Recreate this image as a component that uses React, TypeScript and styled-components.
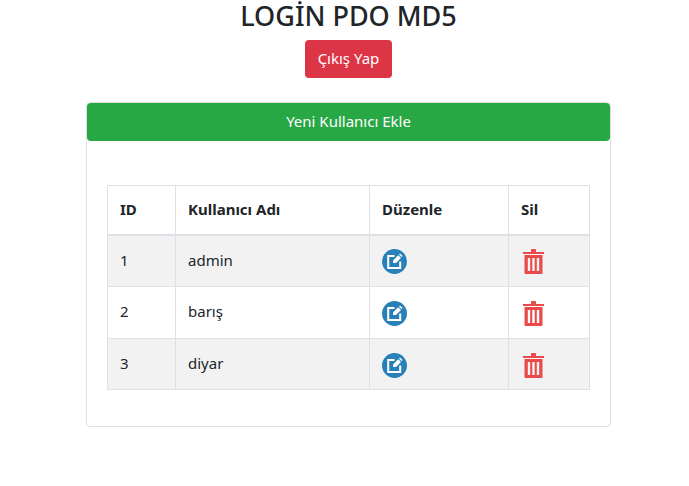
import React from "react";
import styled, { createGlobalStyle } from "styled-components";

const GlobalStyle = createGlobalStyle`
  * { box-sizing: border-box; }
  html, body { margin: 0; padding: 0; background: #fff; }
  body {
    font-family: "Noto Sans", "Open Sans", "Liberation Sans", sans-serif;
    font-size: 15px;
    line-height: 1.5;
    color: #212529;
  }
`;

const Page = styled.div`
  width: 689px;
  height: 486px;
  padding-left: 8px;
  overflow: hidden;
  display: flex;
  flex-direction: column;
  align-items: center;
`;
const Title = styled.h2`
  margin: 0;
  height: 40px;
  font-size: 27px;
  line-height: 32px;
  font-weight: 500;
  color: #212529;
`;
const LogoutButton = styled.a`
  display: block;
  height: 38px;
  width: 87px;
  background: #dc3545;
  color: #fff;
  border-radius: 4px;
  font-size: 15px;
  line-height: 37px;
  text-align: center;
`;
const Card = styled.div`
  width: 525px;
  height: 325px;
  margin-top: 24px;
  border: 1px solid #dfdfdf;
  border-radius: 4px;
`;
const AddButton = styled.a`
  display: block;
  height: 38px;
  background: #28a745;
  color: #fff;
  border-radius: 4px;
  font-size: 15px;
  line-height: 37px;
  text-align: center;
`;
const CardBody = styled.div`
  padding: 44px 20px 0;
`;
const Table = styled.table`
  width: 482px;
  table-layout: fixed;
  border-collapse: collapse;
`;
const HeadCell = styled.th<{ $width: number }>`
  width: ${({ $width }) => $width}px;
  height: 49px;
  padding: 0 12px 1px;
  border: 1px solid #dee2e6;
  border-bottom-width: 2px;
  text-align: left;
  font-weight: 700;
  font-size: 15px;
`;
const Row = styled.tr<{ $striped: boolean }>`
  background: ${({ $striped }) => ($striped ? "#f2f2f2" : "#fff")};
  &:last-child td {
    height: 51px;
  }
`;
const Cell = styled.td`
  height: 52px;
  padding: 0 12px 2px;
  border: 1px solid #dee2e6;
  font-size: 15px;
  vertical-align: middle;
`;
const IconCell = styled(Cell)`
  padding: 2px 12px 0;
`;
const IconSvg = styled.svg`
  display: block;
`;

const EditIcon = () => (
  <IconSvg width="25" height="25" viewBox="0 0 25 25">
    <circle cx="12.5" cy="12.5" r="12.5" fill="#2980b9" />
    <path d="M12.5 7H6.2V19H18.2V12.5" fill="none" stroke="#fff" strokeWidth="2" />
    <path d="M10.2 15l-.2-4.4L16.8 3.8l4.4 4.4L14.4 15z" fill="#2980b9" />
    <path d="M11 14l.2-2.8 5-5 2.8 2.8-5 5z" fill="#fff" />
    <path d="M17 5.4l1-1 2.6 2.6-1 1z" fill="#fff" />
  </IconSvg>
);

const TrashIcon = () => (
  <IconSvg width="24" height="25" viewBox="0 0 24 25">
    <path d="M10 3V.8A.8.8 0 0 1 10.8 0h3.4a.8.8 0 0 1 .8.8V3h8v2H2V3z" fill="#ea4a4a" />
    <path
      d="M3.5 6h18v18a1 1 0 0 1-1 1h-16a1 1 0 0 1-1-1zM6.8 9v13h2.4V9zm4.5 0v13h2.4V9zm4.5 0v13h2.4V9z"
      fill="#ea4a4a"
      fillRule="evenodd"
    />
  </IconSvg>
);

const users = [
  { id: 1, name: "admin" },
  { id: 2, name: "barış" },
  { id: 3, name: "diyar" },
];

export default function App() {
  return (
    <Page>
      <GlobalStyle />
      <Title>LOGİN PDO MD5</Title>
      <LogoutButton>Çıkış Yap</LogoutButton>
      <Card>
        <AddButton>Yeni Kullanıcı Ekle</AddButton>
        <CardBody>
          <Table>
            <thead>
              <tr>
                <HeadCell $width={68}>ID</HeadCell>
                <HeadCell $width={194}>Kullanıcı Adı</HeadCell>
                <HeadCell $width={139}>Düzenle</HeadCell>
                <HeadCell $width={81}>Sil</HeadCell>
              </tr>
            </thead>
            <tbody>
              {users.map((user, i) => (
                <Row key={user.id} $striped={i % 2 === 0}>
                  <Cell>{user.id}</Cell>
                  <Cell>{user.name}</Cell>
                  <IconCell><EditIcon /></IconCell>
                  <IconCell><TrashIcon /></IconCell>
                </Row>
              ))}
            </tbody>
          </Table>
        </CardBody>
      </Card>
    </Page>
  );
}
